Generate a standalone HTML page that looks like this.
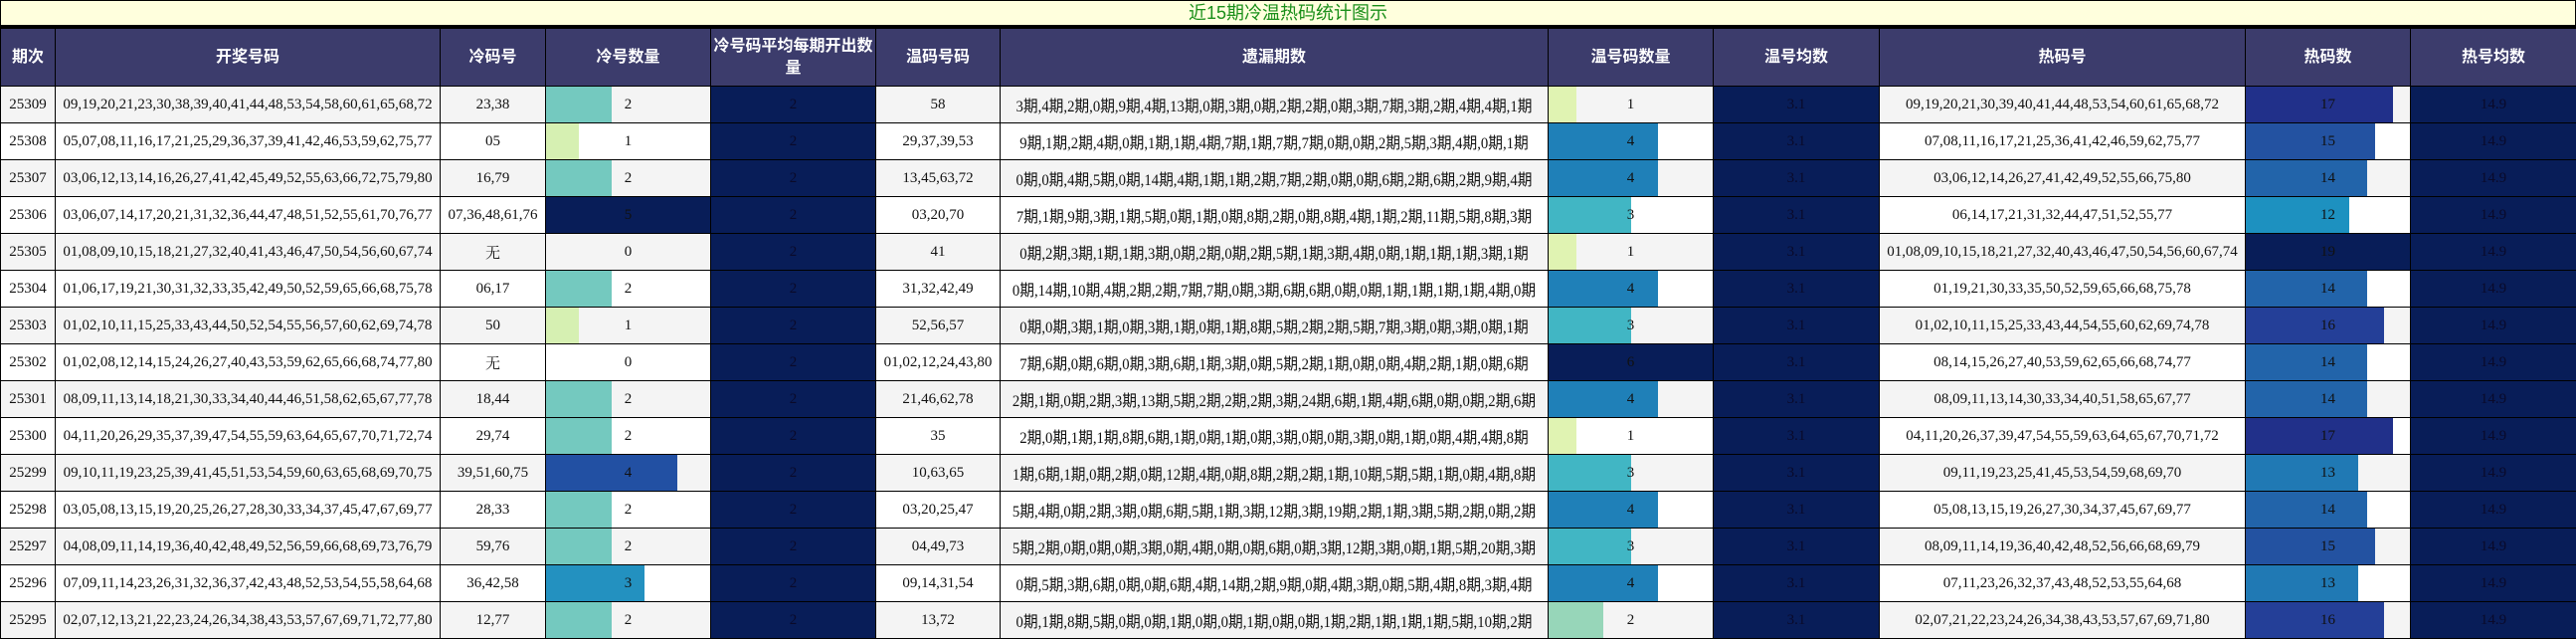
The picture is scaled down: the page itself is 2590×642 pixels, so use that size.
<!DOCTYPE html>
<html><head><meta charset="utf-8">
<style>
*{box-sizing:border-box;margin:0;padding:0}
html,body{width:2590px;height:642px;overflow:hidden;background:#fff}
.title{position:absolute;left:0;top:0;width:2590px;height:28px;background:#ffffdd;border:1px solid #000;border-bottom:3px solid #000;text-align:center;color:#1a8f1a;font:18px/24px "Liberation Sans","Noto Sans CJK SC",sans-serif}
table{position:absolute;left:0;top:28px;width:2590px;border-collapse:collapse;table-layout:fixed;font-family:"Liberation Serif","Noto Serif CJK SC",serif;font-size:15px;color:#111}
td,th{border:1px solid #000;text-align:center;vertical-align:middle;white-space:nowrap;overflow:hidden;padding:0}
th{background:#3c3c6c;color:#fff;font:bold 16px/22px "Liberation Sans","Noto Sans CJK SC",sans-serif;height:58px;white-space:normal}
tr.r{height:37px}
tr.r:nth-child(even) td{background:#f4f4f4}
tr.r:nth-child(odd) td{background:#fff}
td.k{font-size:15px}
td.y{position:relative}
td.y span{position:absolute;left:50%;top:50%;font-size:16px;transform:translate(-50%,-50%) scaleX(.92);font-family:"Liberation Serif","Noto Sans CJK SC",serif}
tr.r td.n{background:#081d58;color:#0a0a2a}
td.b{position:relative}
td.b i{position:absolute;left:0;top:0;bottom:0;display:block}
td.b b{position:relative;font-weight:normal}
</style></head><body>
<div class="title">近15期冷温热码统计图示</div>
<table>
<colgroup><col style="width:55px"><col style="width:387px"><col style="width:106px"><col style="width:166px"><col style="width:166px"><col style="width:125px"><col style="width:551px"><col style="width:166px"><col style="width:167px"><col style="width:368px"><col style="width:166px"><col style="width:167px"></colgroup>
<tr><th>期次</th><th>开奖号码</th><th>冷码号</th><th>冷号数量</th><th>冷号码平均每期开出数量</th><th>温码号码</th><th>遗漏期数</th><th>温号码数量</th><th>温号均数</th><th>热码号</th><th>热码数</th><th>热号均数</th></tr>
<tr class="r"><td>25309</td><td class="k">09,19,20,21,23,30,38,39,40,41,44,48,53,54,58,60,61,65,68,72</td><td>23,38</td><td class="b"><i style="width:40%;background:#74c9bf"></i><b>2</b></td><td class="n">2</td><td>58</td><td class="y"><span>3期,4期,2期,0期,9期,4期,13期,0期,3期,0期,2期,2期,0期,3期,7期,3期,2期,4期,4期,1期</span></td><td class="b"><i style="width:16.7%;background:#e0f3b2"></i><b>1</b></td><td class="n">3.1</td><td>09,19,20,21,30,39,40,41,44,48,53,54,60,61,65,68,72</td><td class="b"><i style="width:89.5%;background:#21308a"></i><b>17</b></td><td class="n">14.9</td></tr>
<tr class="r"><td>25308</td><td class="k">05,07,08,11,16,17,21,25,29,36,37,39,41,42,46,53,59,62,75,77</td><td>05</td><td class="b"><i style="width:20%;background:#d6f0b2"></i><b>1</b></td><td class="n">2</td><td>29,37,39,53</td><td class="y"><span>9期,1期,2期,4期,0期,1期,1期,4期,7期,1期,7期,7期,0期,0期,2期,5期,3期,4期,0期,1期</span></td><td class="b"><i style="width:66.7%;background:#1f80b8"></i><b>4</b></td><td class="n">3.1</td><td>07,08,11,16,17,21,25,36,41,42,46,59,62,75,77</td><td class="b"><i style="width:78.9%;background:#2352a1"></i><b>15</b></td><td class="n">14.9</td></tr>
<tr class="r"><td>25307</td><td class="k">03,06,12,13,14,16,26,27,41,42,45,49,52,55,63,66,72,75,79,80</td><td>16,79</td><td class="b"><i style="width:40%;background:#74c9bf"></i><b>2</b></td><td class="n">2</td><td>13,45,63,72</td><td class="y"><span>0期,0期,4期,5期,0期,14期,4期,1期,1期,2期,7期,2期,0期,0期,6期,2期,6期,2期,9期,4期</span></td><td class="b"><i style="width:66.7%;background:#1f80b8"></i><b>4</b></td><td class="n">3.1</td><td>03,06,12,14,26,27,41,42,49,52,55,66,75,80</td><td class="b"><i style="width:73.7%;background:#2264aa"></i><b>14</b></td><td class="n">14.9</td></tr>
<tr class="r"><td>25306</td><td class="k">03,06,07,14,17,20,21,31,32,36,44,47,48,51,52,55,61,70,76,77</td><td>07,36,48,61,76</td><td class="b"><i style="width:100%;background:#081d58"></i><b>5</b></td><td class="n">2</td><td>03,20,70</td><td class="y"><span>7期,1期,9期,3期,1期,5期,0期,1期,0期,8期,2期,0期,8期,4期,1期,2期,11期,5期,8期,3期</span></td><td class="b"><i style="width:50%;background:#41b6c4"></i><b>3</b></td><td class="n">3.1</td><td>06,14,17,21,31,32,44,47,51,52,55,77</td><td class="b"><i style="width:63.2%;background:#1d91c0"></i><b>12</b></td><td class="n">14.9</td></tr>
<tr class="r"><td>25305</td><td class="k">01,08,09,10,15,18,21,27,32,40,41,43,46,47,50,54,56,60,67,74</td><td>无</td><td class="b"><b>0</b></td><td class="n">2</td><td>41</td><td class="y"><span>0期,2期,3期,1期,1期,3期,0期,2期,0期,2期,5期,1期,3期,4期,0期,1期,1期,1期,3期,1期</span></td><td class="b"><i style="width:16.7%;background:#e0f3b2"></i><b>1</b></td><td class="n">3.1</td><td>01,08,09,10,15,18,21,27,32,40,43,46,47,50,54,56,60,67,74</td><td class="b"><i style="width:100%;background:#081d58"></i><b>19</b></td><td class="n">14.9</td></tr>
<tr class="r"><td>25304</td><td class="k">01,06,17,19,21,30,31,32,33,35,42,49,50,52,59,65,66,68,75,78</td><td>06,17</td><td class="b"><i style="width:40%;background:#74c9bf"></i><b>2</b></td><td class="n">2</td><td>31,32,42,49</td><td class="y"><span>0期,14期,10期,4期,2期,2期,7期,7期,0期,3期,6期,6期,0期,0期,1期,1期,1期,1期,4期,0期</span></td><td class="b"><i style="width:66.7%;background:#1f80b8"></i><b>4</b></td><td class="n">3.1</td><td>01,19,21,30,33,35,50,52,59,65,66,68,75,78</td><td class="b"><i style="width:73.7%;background:#2264aa"></i><b>14</b></td><td class="n">14.9</td></tr>
<tr class="r"><td>25303</td><td class="k">01,02,10,11,15,25,33,43,44,50,52,54,55,56,57,60,62,69,74,78</td><td>50</td><td class="b"><i style="width:20%;background:#d6f0b2"></i><b>1</b></td><td class="n">2</td><td>52,56,57</td><td class="y"><span>0期,0期,3期,1期,0期,3期,1期,0期,1期,8期,5期,2期,2期,5期,7期,3期,0期,3期,0期,1期</span></td><td class="b"><i style="width:50%;background:#41b6c4"></i><b>3</b></td><td class="n">3.1</td><td>01,02,10,11,15,25,33,43,44,54,55,60,62,69,74,78</td><td class="b"><i style="width:84.2%;background:#243f98"></i><b>16</b></td><td class="n">14.9</td></tr>
<tr class="r"><td>25302</td><td class="k">01,02,08,12,14,15,24,26,27,40,43,53,59,62,65,66,68,74,77,80</td><td>无</td><td class="b"><b>0</b></td><td class="n">2</td><td>01,02,12,24,43,80</td><td class="y"><span>7期,6期,0期,6期,0期,3期,6期,1期,3期,0期,5期,2期,1期,0期,0期,4期,2期,1期,0期,6期</span></td><td class="b"><i style="width:100%;background:#081d58"></i><b>6</b></td><td class="n">3.1</td><td>08,14,15,26,27,40,53,59,62,65,66,68,74,77</td><td class="b"><i style="width:73.7%;background:#2264aa"></i><b>14</b></td><td class="n">14.9</td></tr>
<tr class="r"><td>25301</td><td class="k">08,09,11,13,14,18,21,30,33,34,40,44,46,51,58,62,65,67,77,78</td><td>18,44</td><td class="b"><i style="width:40%;background:#74c9bf"></i><b>2</b></td><td class="n">2</td><td>21,46,62,78</td><td class="y"><span>2期,1期,0期,2期,3期,13期,5期,2期,2期,2期,3期,24期,6期,1期,4期,6期,0期,0期,2期,6期</span></td><td class="b"><i style="width:66.7%;background:#1f80b8"></i><b>4</b></td><td class="n">3.1</td><td>08,09,11,13,14,30,33,34,40,51,58,65,67,77</td><td class="b"><i style="width:73.7%;background:#2264aa"></i><b>14</b></td><td class="n">14.9</td></tr>
<tr class="r"><td>25300</td><td class="k">04,11,20,26,29,35,37,39,47,54,55,59,63,64,65,67,70,71,72,74</td><td>29,74</td><td class="b"><i style="width:40%;background:#74c9bf"></i><b>2</b></td><td class="n">2</td><td>35</td><td class="y"><span>2期,0期,1期,1期,8期,6期,1期,0期,1期,0期,3期,0期,0期,3期,0期,1期,0期,4期,4期,8期</span></td><td class="b"><i style="width:16.7%;background:#e0f3b2"></i><b>1</b></td><td class="n">3.1</td><td>04,11,20,26,37,39,47,54,55,59,63,64,65,67,70,71,72</td><td class="b"><i style="width:89.5%;background:#21308a"></i><b>17</b></td><td class="n">14.9</td></tr>
<tr class="r"><td>25299</td><td class="k">09,10,11,19,23,25,39,41,45,51,53,54,59,60,63,65,68,69,70,75</td><td>39,51,60,75</td><td class="b"><i style="width:80%;background:#2250a3"></i><b>4</b></td><td class="n">2</td><td>10,63,65</td><td class="y"><span>1期,6期,1期,0期,2期,0期,12期,4期,0期,8期,2期,2期,1期,10期,5期,5期,1期,0期,4期,8期</span></td><td class="b"><i style="width:50%;background:#41b6c4"></i><b>3</b></td><td class="n">3.1</td><td>09,11,19,23,25,41,45,53,54,59,68,69,70</td><td class="b"><i style="width:68.4%;background:#2079b4"></i><b>13</b></td><td class="n">14.9</td></tr>
<tr class="r"><td>25298</td><td class="k">03,05,08,13,15,19,20,25,26,27,28,30,33,34,37,45,47,67,69,77</td><td>28,33</td><td class="b"><i style="width:40%;background:#74c9bf"></i><b>2</b></td><td class="n">2</td><td>03,20,25,47</td><td class="y"><span>5期,4期,0期,2期,3期,0期,6期,5期,1期,3期,12期,3期,19期,2期,1期,3期,5期,2期,0期,2期</span></td><td class="b"><i style="width:66.7%;background:#1f80b8"></i><b>4</b></td><td class="n">3.1</td><td>05,08,13,15,19,26,27,30,34,37,45,67,69,77</td><td class="b"><i style="width:73.7%;background:#2264aa"></i><b>14</b></td><td class="n">14.9</td></tr>
<tr class="r"><td>25297</td><td class="k">04,08,09,11,14,19,36,40,42,48,49,52,56,59,66,68,69,73,76,79</td><td>59,76</td><td class="b"><i style="width:40%;background:#74c9bf"></i><b>2</b></td><td class="n">2</td><td>04,49,73</td><td class="y"><span>5期,2期,0期,0期,0期,3期,0期,4期,0期,0期,6期,0期,3期,12期,3期,0期,1期,5期,20期,3期</span></td><td class="b"><i style="width:50%;background:#41b6c4"></i><b>3</b></td><td class="n">3.1</td><td>08,09,11,14,19,36,40,42,48,52,56,66,68,69,79</td><td class="b"><i style="width:78.9%;background:#2352a1"></i><b>15</b></td><td class="n">14.9</td></tr>
<tr class="r"><td>25296</td><td class="k">07,09,11,14,23,26,31,32,36,37,42,43,48,52,53,54,55,58,64,68</td><td>36,42,58</td><td class="b"><i style="width:60%;background:#2391c0"></i><b>3</b></td><td class="n">2</td><td>09,14,31,54</td><td class="y"><span>0期,5期,3期,6期,0期,0期,6期,4期,14期,2期,9期,0期,4期,3期,0期,5期,4期,8期,3期,4期</span></td><td class="b"><i style="width:66.7%;background:#1f80b8"></i><b>4</b></td><td class="n">3.1</td><td>07,11,23,26,32,37,43,48,52,53,55,64,68</td><td class="b"><i style="width:68.4%;background:#2079b4"></i><b>13</b></td><td class="n">14.9</td></tr>
<tr class="r"><td>25295</td><td class="k">02,07,12,13,21,22,23,24,26,34,38,43,53,57,67,69,71,72,77,80</td><td>12,77</td><td class="b"><i style="width:40%;background:#74c9bf"></i><b>2</b></td><td class="n">2</td><td>13,72</td><td class="y"><span>0期,1期,8期,5期,0期,0期,1期,0期,0期,1期,0期,0期,1期,2期,1期,1期,1期,5期,10期,2期</span></td><td class="b"><i style="width:33.3%;background:#97d6b9"></i><b>2</b></td><td class="n">3.1</td><td>02,07,21,22,23,24,26,34,38,43,53,57,67,69,71,80</td><td class="b"><i style="width:84.2%;background:#243f98"></i><b>16</b></td><td class="n">14.9</td></tr>
</table>
</body></html>
